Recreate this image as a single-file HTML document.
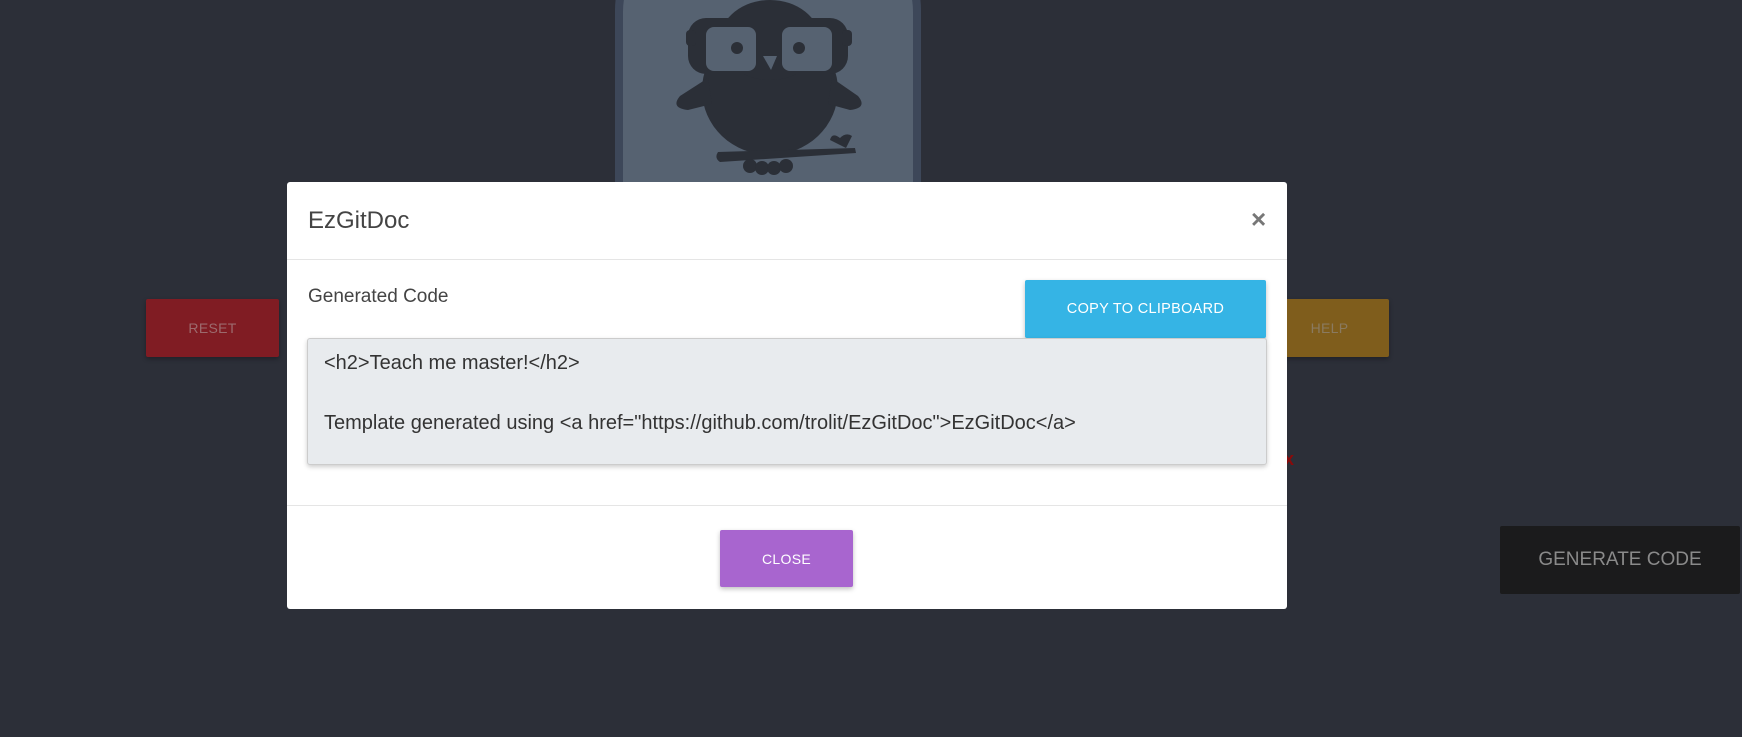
<!DOCTYPE html>
<html><head><meta charset="utf-8"><style>
*{box-sizing:border-box;margin:0;padding:0}
body{width:1742px;height:737px;background:#2c2f38;position:relative;overflow:hidden;font-family:"Liberation Sans",sans-serif}
.abs{position:absolute}
.btn{position:absolute;display:flex;align-items:center;justify-content:center;border-radius:2px;font-size:14px;letter-spacing:.3px}
</style></head><body>
<div class="abs" style="left:615px;top:-80px;width:306px;height:262px;border-radius:90px 90px 0 0;background:#3d4759"></div>
<div class="abs" style="left:623px;top:-72px;width:290px;height:254px;border-radius:84px 84px 0 0;background:#566271"></div>
<svg class="abs" style="left:600px;top:0" width="340" height="182" viewBox="0 0 340 182">
<g fill="#2b2f37">
<ellipse cx="170" cy="90" rx="68" ry="65"/>
<ellipse cx="170" cy="40" rx="50" ry="40"/>
<rect x="88" y="18" width="160" height="56" rx="18"/>
<rect x="86" y="30" width="10" height="16" rx="4"/>
<rect x="242" y="30" width="10" height="16" rx="4"/>
<path d="M108 78 L80 96 Q70 108 88 110 L112 104Z"/>
<path d="M232 78 L258 96 Q268 108 250 110 L228 104Z"/>
<path d="M118 152 L255 148 L256 153 L120 162 Q114 158 118 152Z"/>
<circle cx="150" cy="166" r="7"/><circle cx="162" cy="168" r="7"/><circle cx="174" cy="168" r="7"/><circle cx="186" cy="166" r="7"/>
<path d="M230 140 Q232 132 240 138 Q246 132 252 136 L246 148 Z"/>
</g>
<g fill="#566271">
<rect x="106" y="27" width="50" height="44" rx="8"/>
<rect x="182" y="27" width="50" height="44" rx="8"/>
<path d="M163 56 L177 56 L171 70Z"/>
</g>
<circle cx="137" cy="48" r="6" fill="#2b2f37"/><circle cx="199" cy="48" r="6" fill="#2b2f37"/>
</svg>
<div class="btn" style="left:146px;top:299px;width:133px;height:58px;background:#801c23;color:#9c6a6d;box-shadow:0 2px 5px rgba(0,0,0,.3)">RESET</div>
<div class="btn" style="left:1270px;top:299px;width:119px;height:58px;background:#7f5d1c;color:#8a7a60;box-shadow:0 2px 5px rgba(0,0,0,.3)">HELP</div>
<div class="abs" style="left:1284px;top:449px;width:6px;height:18px;color:#8a0a0a;font-size:18px;font-weight:bold">x</div>
<div class="btn" style="left:1500px;top:526px;width:240px;height:68px;background:#1b1b1c;color:#8a8a8a;font-size:19px;letter-spacing:0">GENERATE CODE</div>

<div class="abs" style="left:287px;top:182px;width:1000px;height:427px;background:#fff;border-radius:3px">
  <div class="abs" style="left:21px;top:25px;font-size:24px;color:#444">EzGitDoc</div>
  <div class="abs" style="left:964px;top:22px;font-size:26px;font-weight:bold;color:#777">×</div>
  <div class="abs" style="left:0;top:77px;width:1000px;height:1px;background:#e5e5e5"></div>
  <div class="abs" style="left:21px;top:104px;font-size:19px;color:#444">Generated Code</div>
  <div class="btn" style="left:738px;top:98px;width:241px;height:58px;background:#35b4e5;color:#fff;font-size:14.5px;box-shadow:0 2px 5px rgba(0,0,0,.25)">COPY TO CLIPBOARD</div>
  <div class="abs" style="left:20px;top:156px;width:960px;height:127px;background:#e8ebee;border:1px solid #ccc;border-radius:3px;box-shadow:0 2px 5px rgba(0,0,0,.2);font-size:20px;color:#333;line-height:30px;padding:9px 16px;white-space:nowrap">&lt;h2&gt;Teach me master!&lt;/h2&gt;<br><br>Template generated using &lt;a href="https://github.com/trolit/EzGitDoc"&gt;EzGitDoc&lt;/a&gt;</div>
  <div class="abs" style="left:0;top:323px;width:1000px;height:1px;background:#e5e5e5"></div>
  <div class="btn" style="left:433px;top:348px;width:133px;height:57px;background:#a865cf;color:#fff;box-shadow:0 2px 5px rgba(0,0,0,.25)">CLOSE</div>
</div>
</body></html>
